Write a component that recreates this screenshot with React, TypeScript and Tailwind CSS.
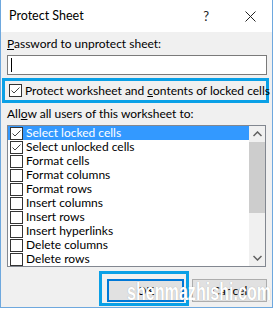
import React from 'react';

const font = { fontFamily: 'Lato, "Noto Sans", sans-serif' };

const perms = [
  { label: 'Select locked cells', checked: true, selected: true },
  { label: 'Select unlocked cells', checked: true },
  { label: 'Format cells' },
  { label: 'Format columns' },
  { label: 'Format rows' },
  { label: 'Insert columns' },
  { label: 'Insert rows' },
  { label: 'Insert hyperlinks' },
  { label: 'Delete columns' },
  { label: 'Delete rows' },
];

const Check: React.FC<{ checked?: boolean }> = ({ checked }) => (
  <div className="w-[13px] h-[13px] shrink-0 border border-[#333333] bg-white flex items-center justify-center">
    {checked && (
      <svg width="11" height="11" viewBox="0 0 11 11">
        <polyline points="1.5,5.5 4,8 9.5,2.5" fill="none" stroke="#444" strokeWidth="1" />
      </svg>
    )}
  </div>
);

export default function App() {
  return (
    <div className="w-[274px] h-[309px] bg-white text-[12px] text-black leading-[16px]" style={font}>
      <div className="w-[273px] h-[308px] flex flex-col border-x border-b border-[#6ea8de]">
        {/* title bar */}
        <div className="h-[32px] shrink-0 bg-white flex items-center pl-[8px]">
          <span className="text-[12.5px]">Protect Sheet</span>
          <span className="ml-auto mr-[36px] text-[13px] text-[#222]">?</span>
          <svg width="11" height="11" viewBox="0 0 11 11" className="mr-[16px]">
            <path d="M0.5 0.5 L10.5 10.5 M10.5 0.5 L0.5 10.5" stroke="#222" strokeWidth="1" />
          </svg>
        </div>

        <div className="flex-1 bg-[#f0f0f0] flex flex-col">
          <div className="ml-[6px] mt-[4px]">
            <span className="underline">P</span>assword to unprotect sheet:
          </div>
          <div className="ml-[6px] mt-[3px] w-[260px] h-[20px] bg-white border border-[#7a7a7a] flex items-center pl-[3px]">
            <div className="w-px h-[14px] bg-black" />
          </div>

          <div className="ml-[1px] mt-[3px] w-[267px] h-[25px] border-[3px] border-[#0aa0e6] flex items-center pl-[4px] gap-[3px]">
            <Check checked />
            <span className="whitespace-nowrap">
              Protect worksheet and <span className="underline">c</span>ontents of locked cells
            </span>
          </div>

          <div className="ml-[6px] mt-[3px]">
            All<span className="underline">o</span>w all users of this worksheet to:
          </div>

          <div className="ml-[6px] mt-[3px] w-[259px] h-[142px] bg-white border border-[#828790] flex">
            <div className="w-[241px] flex flex-col">
              {perms.map((p) => (
                <div
                  key={p.label}
                  className={`h-[14px] flex items-center pl-[2px] gap-[3px] whitespace-nowrap ${
                    p.selected ? 'bg-[#3399ff] text-white' : ''
                  }`}
                >
                  <Check checked={p.checked} />
                  <span>{p.label}</span>
                </div>
              ))}
            </div>
            <div className="w-[16px] bg-[#f0f0f0] flex flex-col">
              <div className="h-[16px] flex items-center justify-center">
                <svg width="9" height="6" viewBox="0 0 9 6">
                  <polyline points="0.5,5 4.5,1 8.5,5" fill="none" stroke="#606060" strokeWidth="1.5" />
                </svg>
              </div>
              <div className="h-[71px] bg-[#cdcdcd]" />
              <div className="flex-1" />
              <div className="h-[16px] flex items-center justify-center">
                <svg width="9" height="6" viewBox="0 0 9 6">
                  <polyline points="0.5,1 4.5,5 8.5,1" fill="none" stroke="#606060" strokeWidth="1.5" />
                </svg>
              </div>
            </div>
          </div>

          <div className="relative flex mt-[4px] ml-[98px]">
            <div className="w-[90px] h-[35px] border-[3px] border-[#0aa0e6] pl-[5px] pt-[5px]">
              <div className="w-[77px] h-[23px] bg-[#e1e1e1] border-2 border-[#0078d7] flex items-center justify-center">
                OK
              </div>
            </div>
            <div className="ml-[3px] mt-[8px] w-[75px] h-[23px] bg-[#e1e1e1] border border-[#adadad] flex items-center justify-center">
              Cancel
            </div>
            <div
              className="absolute left-[28px] top-[10px] text-[23px] leading-[23px] font-bold text-white whitespace-nowrap origin-left scale-x-[0.7]"
              style={{ fontFamily: '"Liberation Sans", Arial, sans-serif', textShadow: '0 0 1px rgba(0,0,0,0.3)' }}
            >
              shenmazhishi.com
            </div>
          </div>
        </div>
      </div>
    </div>
  );
}
